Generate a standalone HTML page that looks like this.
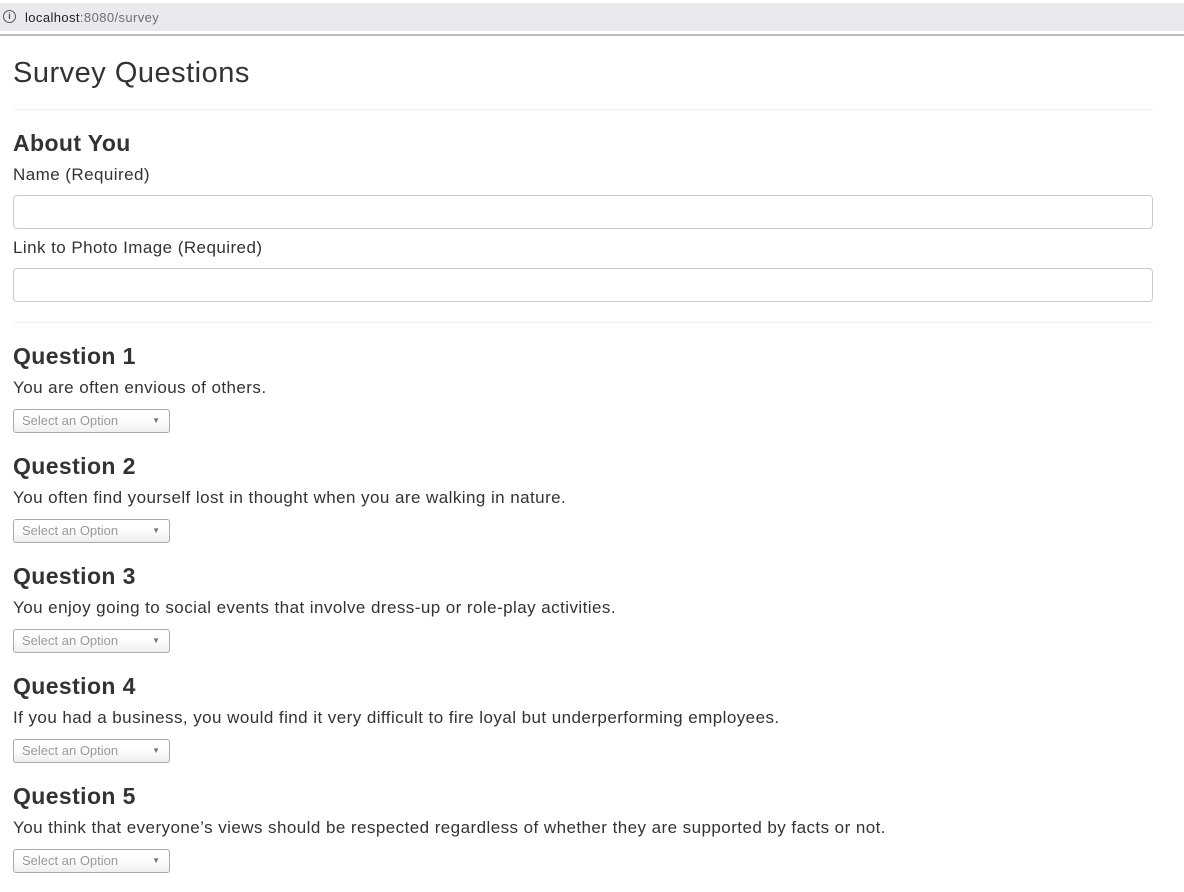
<!DOCTYPE html>
<html><head><style>
body{margin:0;width:1184px;height:892px;overflow:hidden;background:#fff;font-family:"Liberation Sans",Arial,sans-serif;color:#333;position:relative}
.bar{position:absolute;left:0;top:0;width:1184px;height:34px;background:#fff}
.bar .pill{position:absolute;left:0;top:3px;width:1184px;height:28px;background:#e8eaed}
.line{position:absolute;left:0;top:34px;width:1184px;height:2px;background:#bdbdbd}
.url{position:absolute;left:25px;top:10px;font-size:13px;color:#202124;letter-spacing:0.4px}
.url span{color:#6e6e6e}
.info{position:absolute;left:3px;top:10px;width:11px;height:11px;border:1px solid #555;border-radius:50%;font-size:9px;line-height:11px;text-align:center;color:#555;font-weight:bold}
.a{position:absolute;left:13px;white-space:nowrap}
h1{position:absolute;left:13px;top:56px;margin:0;font-size:29px;font-weight:normal;line-height:34px;letter-spacing:0.5px}
.hr{position:absolute;left:13px;width:1140px;height:1px;background:#eee}
.h{font-size:23px;font-weight:bold;line-height:28px;letter-spacing:0.4px}
.t{font-size:17px;line-height:20px;letter-spacing:0.44px}
.inp{position:absolute;left:13px;width:1138px;height:32px;border:1px solid #ccc;border-radius:4px}
.sel{position:absolute;left:13px;width:155px;height:22px;border:1px solid #aaa;border-radius:3px;background:linear-gradient(#fff 40%,#eee);font-size:13px;color:#999;line-height:22px}
.sel i{position:absolute;left:8px;font-style:normal}
.sel b{position:absolute;right:9px;top:0;font-size:8px;color:#777}
</style></head><body>
<div class="bar"><div class="pill"></div><div class="info">i</div><div class="url">localhost<span>:8080/survey</span></div></div>
<div class="line"></div>
<h1>Survey Questions</h1>
<div class="hr" style="top:109px"></div>
<div class="a h" style="top:129px">About You</div>
<div class="a t" style="top:165px">Name (Required)</div>
<div class="inp" style="top:195px"></div>
<div class="a t" style="top:238px">Link to Photo Image (Required)</div>
<div class="inp" style="top:268px"></div>
<div class="hr" style="top:322px"></div>

<div class="a h" style="top:342px">Question 1</div>
<div class="a t" style="top:378px">You are often envious of others.</div>
<div class="sel" style="top:409px"><i>Select an Option</i><b>▼</b></div>

<div class="a h" style="top:452px">Question 2</div>
<div class="a t" style="top:488px">You often find yourself lost in thought when you are walking in nature.</div>
<div class="sel" style="top:519px"><i>Select an Option</i><b>▼</b></div>

<div class="a h" style="top:562px">Question 3</div>
<div class="a t" style="top:598px">You enjoy going to social events that involve dress-up or role-play activities.</div>
<div class="sel" style="top:629px"><i>Select an Option</i><b>▼</b></div>

<div class="a h" style="top:672px">Question 4</div>
<div class="a t" style="top:708px">If you had a business, you would find it very difficult to fire loyal but underperforming employees.</div>
<div class="sel" style="top:739px"><i>Select an Option</i><b>▼</b></div>

<div class="a h" style="top:782px">Question 5</div>
<div class="a t" style="top:818px">You think that everyone’s views should be respected regardless of whether they are supported by facts or not.</div>
<div class="sel" style="top:849px"><i>Select an Option</i><b>▼</b></div>
</body></html>
